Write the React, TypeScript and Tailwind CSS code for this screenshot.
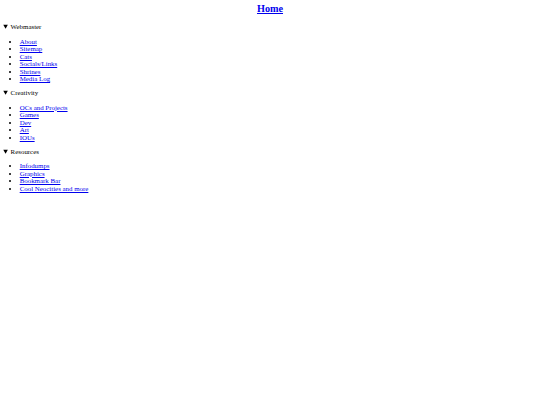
const sections = [
  {
    title: "Webmaster",
    links: ["About", "Sitemap", "Cats", "Socials/Links", "Shrines", "Media Log"],
  },
  {
    title: "Creativity",
    links: ["OCs and Projects", "Games", "Dev", "Art", "IOUs"],
  },
  {
    title: "Resources",
    links: ["Infodumps", "Graphics", "Bookmark Bar", "Cool Neocities and more"],
  },
];

export default function App() {
  return (
    <div className="min-h-[405px] bg-white p-[3.3px] font-['Liberation_Serif',_'Times_New_Roman',_serif] text-[6.9px] leading-[7.5px] text-black">
      <h2 className="mb-[8.3px] text-center text-[10.2px] leading-[11.7px] font-bold">
        <a href="#" className="text-[#0000ee] underline">
          Home
        </a>
      </h2>
      {sections.map((section) => (
        <details key={section.title} open>
          <summary className="cursor-pointer">{section.title}</summary>
          <ul className="my-[6.8px] list-disc pl-[16.4px]">
            {section.links.map((link) => (
              <li key={link}>
                <a href="#" className="text-[#0000ee] underline">
                  {link}
                </a>
              </li>
            ))}
          </ul>
        </details>
      ))}
    </div>
  );
}
